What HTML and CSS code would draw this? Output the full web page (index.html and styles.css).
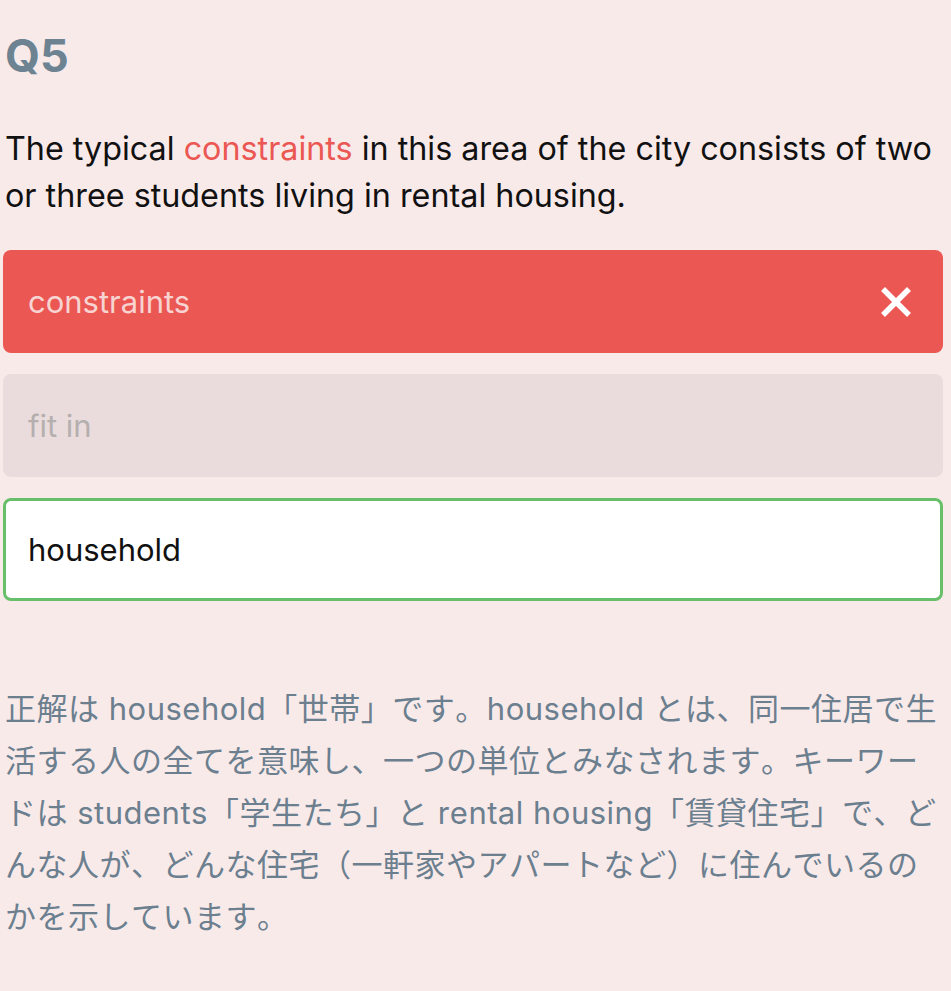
FILE: index.html
```html
<!DOCTYPE html>
<html lang="ja">
<head>
<meta charset="utf-8">
<link rel="stylesheet" href="styles.css">
</head>
<body>
<main class="quiz">
  <h1 class="qnum">Q5</h1>
  <p class="question">The typical <span class="wrong-word">constraints</span> in this area of the city consists of two or three students living in rental housing.</p>
  <div class="options">
    <div class="option option-wrong">
      <span>constraints</span>
      <svg class="xicon" viewBox="0 0 34 34" width="34" height="34"><path d="M4 4 L30 30 M30 4 L4 30" stroke="#fff" stroke-width="5.5" stroke-linecap="butt"/></svg>
    </div>
    <div class="option option-disabled"><span>fit in</span></div>
    <div class="option option-correct"><span>household</span></div>
  </div>
  <p class="explain">正解は household「世帯」です。household とは、同一住居で生活する人の全てを意味し、一つの単位とみなされます。キーワードは students「学生たち」と rental housing「賃貸住宅」で、どんな人が、どんな住宅（一軒家やアパートなど）に住んでいるのかを示しています。</p>
</main>
</body>
</html>
```
FILE: styles.css
```css
html, body {
  margin: 0;
  padding: 0;
  background: #f9eaea;
}
body {
  font-family: Inter, "Noto Sans CJK JP", sans-serif;
}
.quiz {
  padding: 0 8px 0 3px;
}
.qnum {
  margin: 0;
  padding-top: 28px;
  padding-left: 2px;
  font-size: 45px;
  line-height: 56px;
  font-weight: 700;
  color: #6d8392;
}
.question {
  margin: 0;
  padding: 41px 0 0 2px;
  font-size: 32.3px;
  line-height: 47px;
  color: #111;
}
.wrong-word {
  color: #eb5753;
}
.options {
  display: flex;
  flex-direction: column;
  gap: 21px;
  margin-top: 31px;
}
.option {
  height: 103px;
  box-sizing: border-box;
  border-radius: 8px;
  display: flex;
  align-items: center;
  justify-content: space-between;
  padding: 0 30px 0 25px;
  font-size: 31px;
}
.option-wrong {
  background: #eb5753;
  color: #f7d3d1;
}
.option-disabled {
  background: #eadcdc;
  color: #b5afaf;
}
.option-correct {
  background: #fff;
  border: 3px solid #67bf69;
  color: #111;
  padding-left: 22px;
}
.xicon {
  display: block;
}
.explain {
  margin: 0;
  padding: 82px 0 0 2px;
  font-size: 31px;
  line-height: 52px;
  color: #6b7f8f;
  font-kerning: none;
  letter-spacing: 0.5px;
}
```
